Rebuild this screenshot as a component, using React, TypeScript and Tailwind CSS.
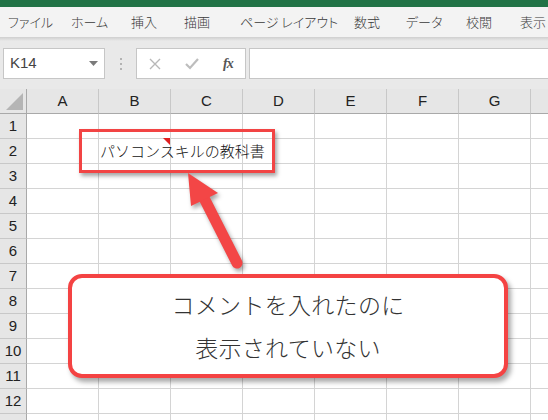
import React from 'react';

const jp = "font-['Noto_Sans_CJK_JP','Noto_Sans',sans-serif]";

const tabs = [
  { label: 'ファイル', w: 'w-[63px]' },
  { label: 'ホーム', w: 'w-[60px]' },
  { label: '挿入', w: 'w-[53px]' },
  { label: '描画', w: 'w-[56px]' },
  { label: 'ページ レイアウト', w: 'w-[114px]' },
  { label: '数式', w: 'w-[52px]' },
  { label: 'データ', w: 'w-[60px]' },
  { label: '校閲', w: 'w-[54px]' },
  { label: '表示', w: 'w-[40px]' },
];

const cols = ['A', 'B', 'C', 'D', 'E', 'F', 'G', 'H'];
const rows = [1, 2, 3, 4, 5, 6, 7, 8, 9, 10, 11, 12, 13];

export default function App() {
  return (
    <div className={`relative w-[548px] h-[420px] overflow-hidden bg-white ${jp}`}>
      {/* タイトルバー */}
      <div className="h-[7px] bg-[#217346]" />

      {/* リボンのタブ */}
      <div className="h-[30px] bg-[#f3f3f3] flex items-center pl-[8px] text-[13px] font-light text-[#3a3a3a] [font-feature-settings:'palt'] whitespace-nowrap">
        {tabs.map((t) => (
          <div key={t.label} className={`${t.w} shrink-0`}>
            {t.label}
          </div>
        ))}
      </div>

      {/* 数式バー */}
      <div className="h-[52px] bg-[#e9e9e9] relative">
        <div className="h-[4px] bg-gradient-to-b from-[#cfcfcf] to-[#e9e9e9]" />
        <div className="flex items-start pt-[7px] pl-[3px]">
          <div className="w-[102px] h-[31px] bg-white border border-[#c6c6c6] flex items-center justify-between pl-[6px] pr-[6px]">
            <span className="font-['Liberation_Sans',sans-serif] text-[15px] text-[#444]">K14</span>
            <svg width="9" height="5" viewBox="0 0 9 5">
              <path d="M0 0 L9 0 L4.5 5 Z" fill="#7a7a7a" />
            </svg>
          </div>
          <div className="w-[31px] h-[31px] flex flex-col items-center justify-center gap-[3px]">
            <div className="w-[2px] h-[2px] bg-[#b3b3b3]" />
            <div className="w-[2px] h-[2px] bg-[#b3b3b3]" />
            <div className="w-[2px] h-[2px] bg-[#b3b3b3]" />
          </div>
          <div className="w-[110px] h-[31px] bg-white border border-[#c6c6c6] flex items-center pl-[12px]">
            <svg width="12" height="12" viewBox="0 0 12 12">
              <path d="M1 1 L11 11 M11 1 L1 11" stroke="#b8b8b8" strokeWidth="1.4" />
            </svg>
            <svg width="14" height="12" viewBox="0 0 14 12" className="ml-[24px]">
              <path d="M1 6 L5 10 L13 1" stroke="#bdbdbd" strokeWidth="2.2" fill="none" />
            </svg>
            <span className="ml-[24px] font-['Liberation_Serif',serif] italic text-[14px] text-[#555] font-bold tracking-[-1px]">
              fx
            </span>
          </div>
          <div className="ml-[3px] flex-1 h-[31px] bg-white border border-[#c6c6c6] border-r-0" />
        </div>
      </div>

      {/* シート */}
      <div className="font-['Liberation_Sans',sans-serif]">
        <div className="flex h-[25px]">
          <div className="w-[27px] shrink-0 bg-[#e6e6e6] border-r border-b border-[#a9a9a9] relative">
            <svg width="17" height="17" viewBox="0 0 17 17" className="absolute left-[6px] bottom-[3px]">
              <path d="M17 0 L17 17 L0 17 Z" fill="#b5b5b5" />
            </svg>
          </div>
          {cols.map((c) => (
            <div
              key={c}
              className="w-[72px] shrink-0 bg-[#e6e6e6] border-r border-r-[#c8c8c8] border-b border-b-[#a9a9a9] flex items-center justify-center text-[15px] text-[#222]"
            >
              {c}
            </div>
          ))}
        </div>
        {rows.map((r) => (
          <div key={r} className="flex h-[25px]">
            <div className="w-[27px] shrink-0 bg-[#e6e6e6] border-r border-r-[#a9a9a9] border-b border-b-[#c8c8c8] flex items-center justify-center text-[15px] text-[#222]">
              {r}
            </div>
            {cols.map((c) => (
              <div key={c} className="w-[72px] shrink-0 border-r border-b border-[#d4d4d4] relative">
                {r === 2 && c === 'B' && (
                  <>
                    <span className={`absolute left-[1px] top-0 h-full flex items-center whitespace-nowrap text-[15px] font-light text-[#111] z-10 ${jp}`}>
                      パソコンスキルの教科書
                    </span>
                    <svg width="7" height="7" viewBox="0 0 7 7" className="absolute right-[0px] top-[-1px] z-20">
                      <path d="M0 0 L7 0 L7 7 Z" fill="#e02020" />
                    </svg>
                  </>
                )}
              </div>
            ))}
          </div>
        ))}
      </div>

      {/* 強調の枠 */}
      <div className="absolute left-[79px] top-[129px] w-[196px] h-[44px] border-[3px] border-[#f24444] shadow-[2px_3px_4px_rgba(0,0,0,0.35)] z-30" />

      {/* 矢印 */}
      <svg width="548" height="420" viewBox="0 0 548 420" className="absolute left-0 top-0 z-30 pointer-events-none drop-shadow-[2px_3px_2px_rgba(0,0,0,0.35)]">
        <line x1="204" y1="198" x2="237" y2="263" stroke="#f34646" strokeWidth="11" strokeLinecap="round" />
        <path d="M188 173 L218 193 L191 206 Z" fill="#f34646" />
      </svg>

      {/* 吹き出し */}
      <div className="absolute left-[68px] top-[274px] w-[440px] h-[104px] bg-white border-[4px] border-[#f44343] rounded-[14px] shadow-[3px_4px_5px_rgba(0,0,0,0.35)] z-30 flex flex-col items-center justify-center text-[23px] font-light leading-[43px] text-[#333] tracking-[0.3px]">
        <div>コメントを入れたのに</div>
        <div>表示されていない</div>
      </div>
    </div>
  );
}
